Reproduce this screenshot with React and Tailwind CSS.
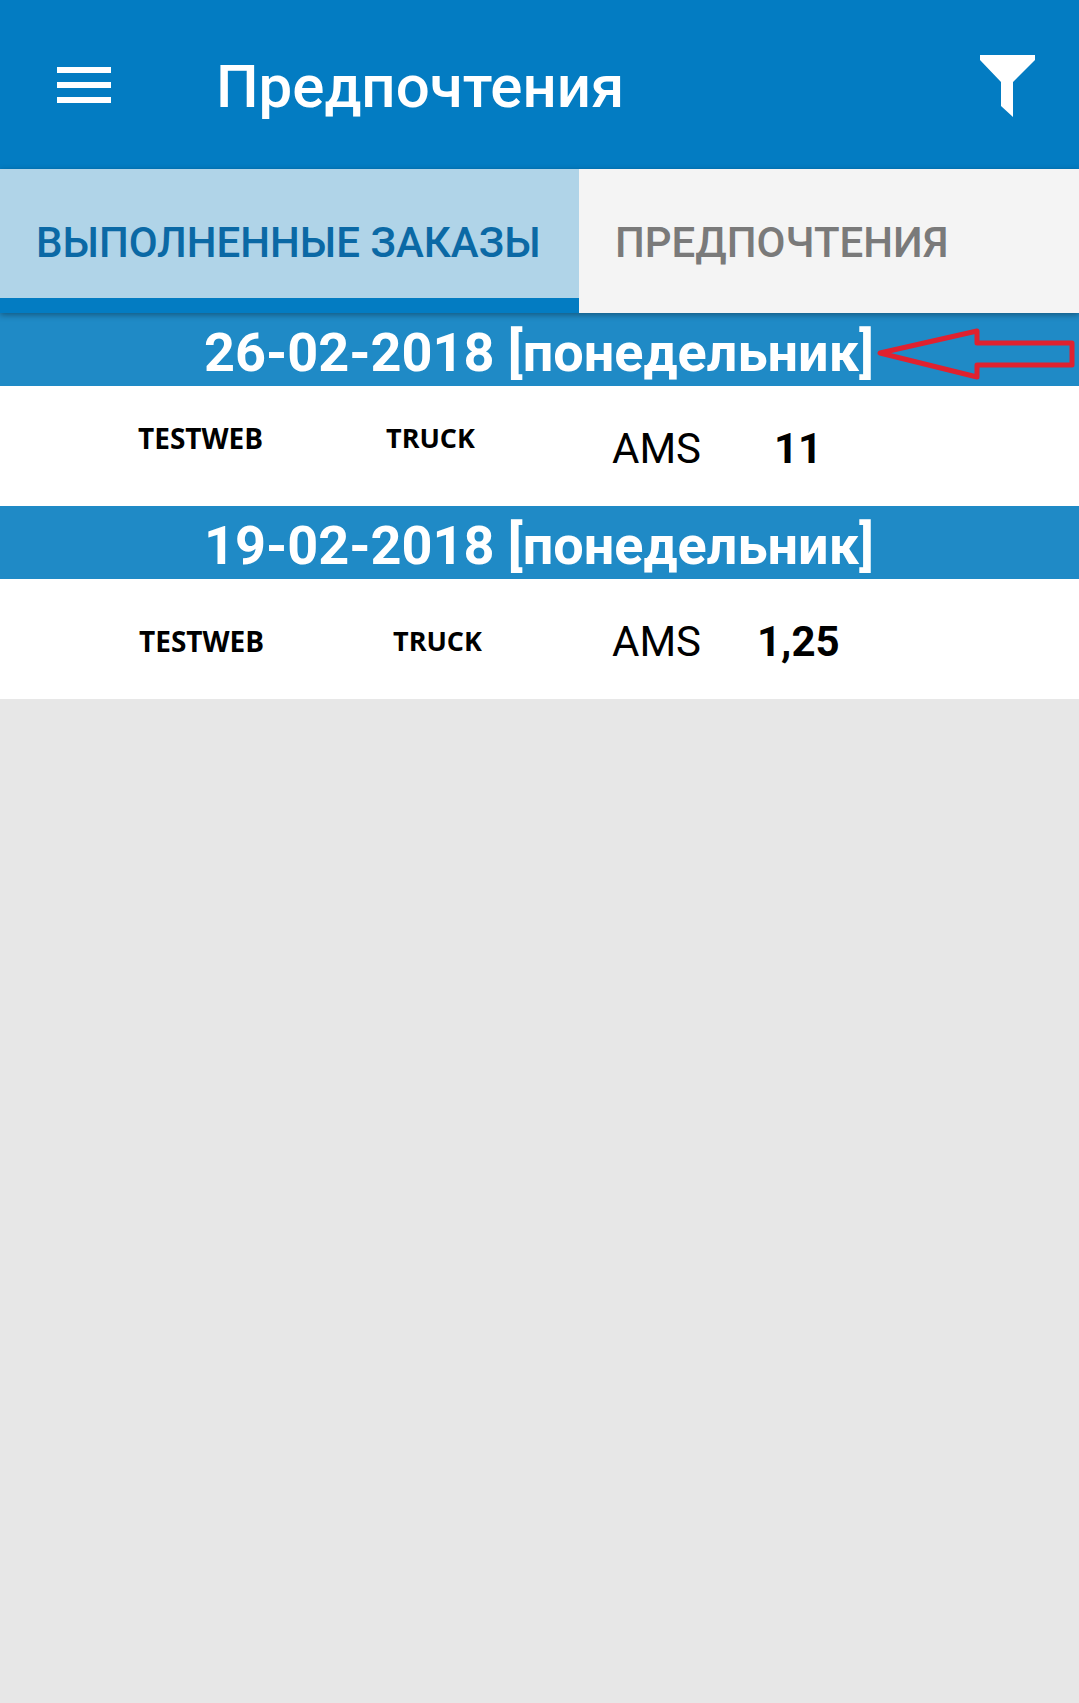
import { Fragment } from 'react';

const days = [
  {
    date: '26-02-2018 [понедельник]',
    rowPad: 'pl-[138px]',
    nameWidth: 'w-[248px]',
    truckWidth: 'w-[226px]',
    labelPad: 'pb-[16px]',
    qty: '11',
    qtyPad: 'pl-[73px]',
  },
  {
    date: '19-02-2018 [понедельник]',
    rowPad: 'pl-[139px]',
    nameWidth: 'w-[254px]',
    truckWidth: 'w-[219px]',
    labelPad: 'pt-[4px]',
    qty: '1,25',
    qtyPad: 'pl-[56px]',
  },
];

function MenuIcon() {
  return (
    <div className="flex flex-col justify-between w-[54px] h-[36px]">
      <div className="h-[6px] bg-white" />
      <div className="h-[6px] bg-white" />
      <div className="h-[6px] bg-white" />
    </div>
  );
}

function FilterIcon() {
  return (
    <svg width="55" height="62" viewBox="0 0 55 62" className="mt-[3px]">
      <path d="M0 0H55V5L33 27V62L21 51V27L0 5Z" fill="#fff" />
    </svg>
  );
}

function RedArrow() {
  return (
    <svg width="204" height="56" viewBox="0 0 204 56" className="absolute left-[875px] top-[325px]" fill="none">
      <path d="M5 28L102 6V18H197V40H102V52Z" stroke="#e0212f" strokeWidth="5" strokeLinejoin="round" />
    </svg>
  );
}

export default function App() {
  return (
    <div className="relative min-h-[1703px] bg-[#e7e7e7] font-['Roboto',sans-serif]">
      {/* Header */}
      <div className="flex items-center h-[169px] bg-[#037cc2] pl-[57px] pr-[44px]">
        <MenuIcon />
        <div className="ml-[105px] flex-1 pt-[4px] text-[60px] font-medium leading-none text-white">Предпочтения</div>
        <FilterIcon />
      </div>

      {/* Tabs */}
      <div className="relative z-10 flex h-[144px] bg-[#037cc2] shadow-[0_2px_6px_rgba(0,0,0,0.35)]">
        <div className="flex items-center w-[579px] h-[129px] pl-[36px] pt-[18px] bg-[#b0d4e8] text-[42px] font-medium text-[#0b69a5]">
          ВЫПОЛНЕННЫЕ ЗАКАЗЫ
        </div>
        <div className="flex-1 flex items-center pl-[36px] pt-[3px] bg-[#f4f4f4] text-[42px] font-medium text-[#7a7a7a]">
          ПРЕДПОЧТЕНИЯ
        </div>
      </div>

      {days.map((day) => (
        <Fragment key={day.date}>
          <div className="flex items-center justify-center h-[73px] bg-[#1f8ac6] pt-[6px] pr-[1px] text-[54px] font-bold leading-none text-white">
            {day.date}
          </div>
          <div className={`flex items-center h-[120px] ${day.rowPad} bg-white text-black`}>
            <div className={`${day.nameWidth} ${day.labelPad} font-['Open_Sans',sans-serif] text-[28px] font-bold`}>TESTWEB</div>
            <div className={`${day.truckWidth} ${day.labelPad} font-['Open_Sans',sans-serif] text-[27px] font-bold`}>TRUCK</div>
            <div className="pt-[4px] text-[42px]">AMS</div>
            <div className={`${day.qtyPad} pt-[4px] text-[42px] font-bold`}>{day.qty}</div>
          </div>
        </Fragment>
      ))}

      <RedArrow />
    </div>
  );
}
